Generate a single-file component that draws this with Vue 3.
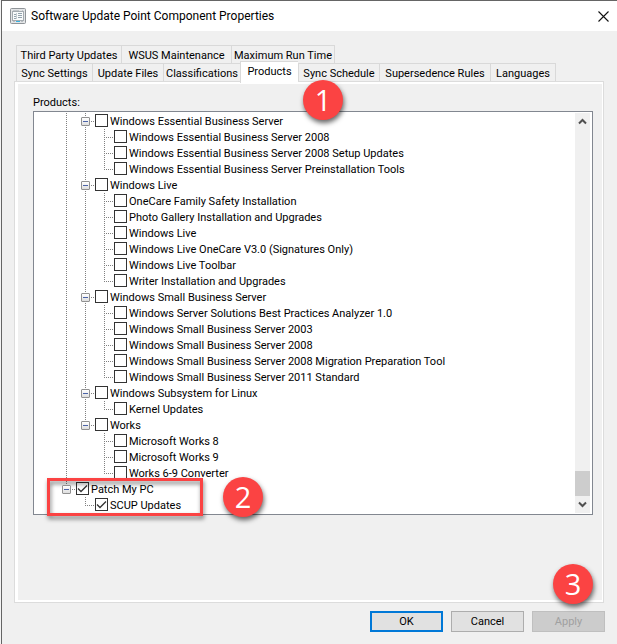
<script setup>
import { ref } from 'vue'

const upperTabs = ['Third Party Updates', 'WSUS Maintenance', 'Maximum Run Time']
const lowerTabs = [
  'Sync Settings', 'Update Files', 'Classifications', 'Products',
  'Sync Schedule', 'Supersedence Rules', 'Languages',
]
const activeTab = ref('Products')

const groups = [
  { name: 'Windows Essential Business Server', items: [
    'Windows Essential Business Server 2008',
    'Windows Essential Business Server 2008 Setup Updates',
    'Windows Essential Business Server Preinstallation Tools',
  ] },
  { name: 'Windows Live', items: [
    'OneCare Family Safety Installation',
    'Photo Gallery Installation and Upgrades',
    'Windows Live',
    'Windows Live OneCare V3.0 (Signatures Only)',
    'Windows Live Toolbar',
    'Writer Installation and Upgrades',
  ] },
  { name: 'Windows Small Business Server', items: [
    'Windows Server Solutions Best Practices Analyzer 1.0',
    'Windows Small Business Server 2003',
    'Windows Small Business Server 2008',
    'Windows Small Business Server 2008 Migration Preparation Tool',
    'Windows Small Business Server 2011 Standard',
  ] },
  { name: 'Windows Subsystem for Linux', items: ['Kernel Updates'] },
  { name: 'Works', items: ['Microsoft Works 8', 'Microsoft Works 9', 'Works 6-9 Converter'] },
]

// Guide cells, left to right: line = passes through, tee = branch, end = last branch,
// open / open-last = expander with or without a line below it.
const rows = []
groups.forEach((group, g) => {
  const lastGroup = g === groups.length - 1
  rows.push({ label: group.name, guides: ['line', lastGroup ? 'open-last' : 'open'], checked: false })
  group.items.forEach((item, i) => {
    rows.push({
      label: item,
      guides: ['line', lastGroup ? 'blank' : 'line', i === group.items.length - 1 ? 'end' : 'tee'],
      checked: false,
    })
  })
})
rows.push({ label: 'Patch My PC', guides: ['open-last'], checked: true })
rows.push({ label: 'SCUP Updates', guides: ['blank', 'end'], checked: true })
const tree = ref(rows)
</script>

<template>
  <div class="desktop">
    <main class="window">
      <header class="titlebar">
        <svg class="app-icon" viewBox="0 0 16 16" aria-hidden="true">
          <rect x="0.5" y="0.5" width="15" height="15" rx="1" fill="#e3e5e7" stroke="#8f9498" />
          <rect x="2.5" y="3.5" width="11" height="9" fill="#f8fafb" stroke="#a4abb0" />
          <path d="M3 2.5h6M12 2.5h1" stroke="#c0c5c9" />
          <path d="M4 6.5h2M4 8.5h2M4 10.5h2M8 5.5h4M8 7.5h4M8 9.5h4" stroke="#93a3ad" />
          <path d="M6.500 5v6" stroke="#c5cdd2" />
          <path d="M6 13.5h4" stroke="#35b4e4" />
          <path d="M3 13.5h2M11 13.5h2" stroke="#b9bec2" />
        </svg>
        <h1 class="title">Software Update Point Component Properties</h1>
        <button class="close" type="button" aria-label="Close">
          <svg viewBox="0 0 11 11" aria-hidden="true"><path d="M0.5 0.5l10 10M10.5 0.5l-10 10" fill="none" stroke="#111" stroke-width="1.1" /></svg>
        </button>
      </header>

      <div class="body">
        <nav class="tabs" role="tablist">
          <div class="tab-row upper">
            <button v-for="t in upperTabs" :key="t" type="button" role="tab" class="tab"
              :class="{ active: t === activeTab }" :aria-selected="t === activeTab" @click="activeTab = t">{{ t }}</button>
          </div>
          <div class="tab-row lower">
            <button v-for="t in lowerTabs" :key="t" type="button" role="tab" class="tab"
              :class="{ active: t === activeTab }" :aria-selected="t === activeTab" @click="activeTab = t">{{ t }}</button>
          </div>
          <span class="badge badge-tabs">1</span>
        </nav>

        <section class="panel">
          <h2 class="label">Products:</h2>
          <div class="tree-box">
            <ul class="tree">
              <li v-for="(row, r) in tree" :key="r" class="row">
                <span v-for="(g, i) in row.guides" :key="i" class="guide" :class="g">
                  <button v-if="g.startsWith('open')" class="expander" type="button" :aria-label="'Collapse ' + row.label"></button>
                </span>
                <label class="item">
                  <input v-model="row.checked" class="check" type="checkbox" />
                  <span>{{ row.label }}</span>
                </label>
              </li>
            </ul>
            <div class="scrollbar">
              <button class="arrow" type="button" aria-label="Scroll up">
                <svg viewBox="0 0 9 7" aria-hidden="true"><path d="M1 5.5l3.500-3.500l3.500 3.500" fill="none" stroke="#505050" stroke-width="2" /></svg>
              </button>
              <div class="track"><div class="thumb"></div></div>
              <button class="arrow" type="button" aria-label="Scroll down">
                <svg viewBox="0 0 9 7" aria-hidden="true"><path d="M1 1.500l3.500 3.500l3.500-3.500" fill="none" stroke="#505050" stroke-width="2" /></svg>
              </button>
            </div>
            <span class="highlight"></span>
            <span class="badge badge-tree">2</span>
          </div>
        </section>

        <footer class="actions">
          <button class="btn primary" type="button">OK</button>
          <button class="btn" type="button">Cancel</button>
          <div class="apply">
            <button class="btn" type="button" disabled>Apply</button>
            <span class="badge badge-apply">3</span>
          </div>
        </footer>
      </div>
    </main>
  </div>
</template>

<style>
body {
  margin: 0;
  background: #f0f0f0;
}
</style>

<style scoped>
* {
  box-sizing: border-box;
}
button {
  font: inherit;
  color: inherit;
  padding: 0;
  margin: 0;
}
.desktop {
  min-height: 100vh;
  display: flex;
  padding-left: 1px;
  background: #f4f4f4;
  font: 11px/14px Roboto, "Liberation Sans", sans-serif;
  color: #000;
}
.window {
  flex: 1;
  min-width: 0;
  display: flex;
  flex-direction: column;
  background: #f0f0f0;
  border-top: 1px solid #656565;
  border-left: 1px solid #656565;
}
.titlebar {
  display: flex;
  align-items: center;
  height: 30px;
  padding: 0 8px;
  background: #fff;
}
.app-icon {
  width: 16px;
  height: 16px;
  flex: none;
}
.title {
  flex: 1;
  margin: 0 0 0 5px;
  font: 400 12px/16px Roboto, "Open Sans", sans-serif;
  white-space: nowrap;
}
.close {
  display: flex;
  width: 11px;
  height: 11px;
  border: 0;
  background: none;
}
.close svg {
  width: 11px;
  height: 11px;
}
.body {
  flex: 1;
  display: flex;
  flex-direction: column;
  padding: 14px 12px 12px;
}
.tabs {
  position: relative;
  padding: 0 2px;
}
.tab-row {
  display: grid;
  height: 18px;
}
.upper {
  grid-template-columns: 105px 110px 104px;
}
.lower {
  grid-template-columns: 76px 71px 77px 58px 81px 111px 66px;
}
.tab {
  padding-top: 2px;
  border: 1px solid #d9d9d9;
  border-right-width: 0;
  border-bottom: 0;
  background: #f0f0f0;
  white-space: nowrap;
}
.tab:last-child {
  border-right-width: 1px;
}
.tab.active {
  position: relative;
  z-index: 1;
  margin: -2px 0 -2px;
  padding-bottom: 3px;
  background: #fff;
}
.panel {
  flex: 1;
  margin-right: 1px;
  border: 1px solid #dcdcdc;
  background: #f0f0f0;
  box-shadow: inset 3px 2px #fff, inset -1px -2px #fff;
  padding: 14px 10px 0 18px;
}
.label {
  margin: 0 0 1px;
  font: inherit;
}
.tree-box {
  position: relative;
  display: flex;
  padding: 1px;
  padding-left: 23px;
  background: #fff;
  border: 1px solid #828790;
}
.tree {
  flex: 1;
  min-width: 0;
  margin: 0;
  padding: 0;
  list-style: none;
}
.row {
  display: flex;
  height: 16px;
}
.guide {
  position: relative;
  flex: none;
  width: 19px;
}
.guide::before {
  content: "";
  position: absolute;
  left: 9px;
  top: 0;
  width: 1px;
  height: 16px;
  background: repeating-linear-gradient(#808080 0 1px, #fff 1px 2px);
}
.guide::after {
  content: "";
  position: absolute;
  left: 9px;
  top: 8px;
  width: 10px;
  height: 1px;
  background: repeating-linear-gradient(90deg, #808080 0 1px, #fff 1px 2px);
}
.blank::before,
.blank::after,
.line::after {
  display: none;
}
.end::before,
.open-last::before {
  height: 8px;
}
.expander {
  position: absolute;
  z-index: 1;
  left: 5px;
  top: 4px;
  width: 9px;
  height: 9px;
  border: 1px solid #919191;
  border-radius: 1px;
  background: linear-gradient(#4b63a7, #4b63a7) center / 5px 1px no-repeat, linear-gradient(#fff, #dedede);
}
.item {
  display: flex;
  align-items: flex-start;
  gap: 2px;
  line-height: 18px;
  white-space: nowrap;
}
.check {
  appearance: none;
  flex: none;
  width: 13px;
  height: 13px;
  margin: 1px 0 0;
  border: 1px solid #333;
  background: #fff;
}
.check:checked {
  background: #fff url("data:image/svg+xml,%3Csvg xmlns='http://www.w3.org/2000/svg' viewBox='0 0 11 11'%3E%3Cpath d='M1 5.500l3 3 6-6' fill='none' stroke='%23333' stroke-width='1.300'/%3E%3C/svg%3E") center / 11px 11px no-repeat;
}
.scrollbar {
  flex: none;
  display: flex;
  flex-direction: column;
  width: 15px;
  margin-right: 1px;
  background: #f0f0f0;
}
.arrow {
  display: flex;
  align-items: center;
  justify-content: center;
  height: 17px;
  border: 0;
  background: none;
}
.arrow svg {
  width: 9px;
  height: 7px;
}
.track {
  flex: 1;
  display: flex;
  flex-direction: column;
  justify-content: flex-end;
}
.thumb {
  height: 25px;
  background: #cdcdcd;
}
.highlight {
  position: absolute;
  left: 13px;
  bottom: -2px;
  width: 156px;
  height: 38px;
  border: 3px solid #fb4343;
  filter: drop-shadow(1px 3px 2px rgba(0, 0, 0, 0.5));
  pointer-events: none;
}
.badge {
  position: absolute;
  z-index: 2;
  display: flex;
  align-items: center;
  justify-content: center;
  width: 40px;
  height: 40px;
  border-radius: 50%;
  background: #fb4343;
  box-shadow: 1px 3px 5px rgba(0, 0, 0, 0.6);
  color: #fff;
  font: 29px/38px "Open Sans", "Noto Sans", sans-serif;
  pointer-events: none;
}
.badge-tabs {
  left: 289px;
  top: 35px;
}
.badge-tree {
  left: 189px;
  bottom: -3px;
}
.badge-apply {
  left: 21px;
  bottom: 28px;
}
.actions {
  display: flex;
  justify-content: flex-end;
  gap: 8px;
  padding-top: 8px;
}
.apply {
  position: relative;
}
.btn {
  display: block;
  width: 73px;
  height: 21px;
  padding-top: 1px;
  border: 1px solid #adadad;
  background: #e1e1e1;
}
.btn.primary {
  border: 2px solid #0078d7;
}
.btn:disabled {
  border-color: #bfbfbf;
  background: #ccc;
  color: #a0a0a0;
}
</style>
